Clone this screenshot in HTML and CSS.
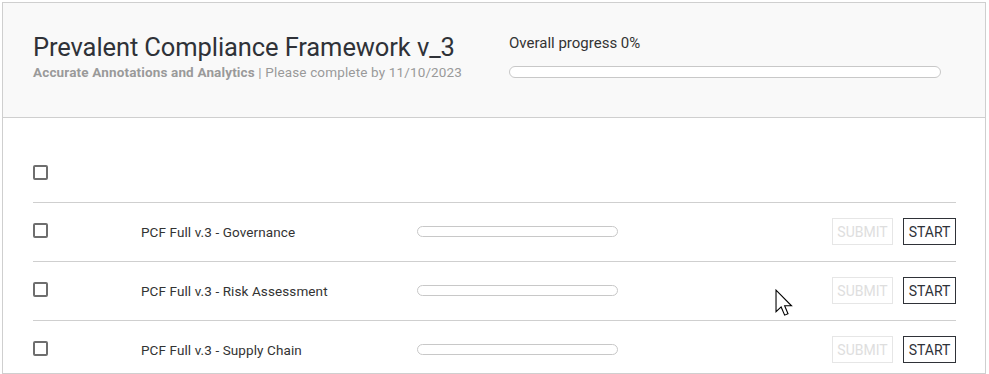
FILE: index.html
```html
<!DOCTYPE html>
<html>
<head>
<meta charset="utf-8">
<link rel="stylesheet" href="styles.css">
</head>
<body>
<div class="panel">
  <header class="head">
    <div class="head-title">
      <h1 class="title">Prevalent Compliance Framework v_3</h1>
      <div class="sub"><b>Accurate Annotations and Analytics</b> | Please complete by 11/10/2023</div>
    </div>
    <div class="overall">
      <div class="overall-label">Overall progress 0%</div>
      <div class="bar bar-wide"></div>
    </div>
  </header>
  <div class="list">
    <div class="row row-head">
      <span class="check"></span>
    </div>
    <div class="row">
      <span class="check"></span>
      <span class="name">PCF Full v.3 - Governance</span>
      <div class="bar bar-row"></div>
      <div class="actions"><button class="btn btn-off">SUBMIT</button><button class="btn">START</button></div>
    </div>
    <div class="row">
      <span class="check"></span>
      <span class="name">PCF Full v.3 - Risk Assessment</span>
      <div class="bar bar-row"></div>
      <div class="actions"><button class="btn btn-off">SUBMIT</button><button class="btn">START</button></div>
    </div>
    <div class="row">
      <span class="check"></span>
      <span class="name">PCF Full v.3 - Supply Chain</span>
      <div class="bar bar-row"></div>
      <div class="actions"><button class="btn btn-off">SUBMIT</button><button class="btn">START</button></div>
    </div>
  </div>
</div>
<svg class="cursor" width="19" height="28" viewBox="0 0 13 19"><path d="M0.7 0.7 L0.7 15.5 L4.2 12.2 L6.6 17.8 L8.9 16.8 L6.6 11.4 L11.3 11.4 Z" fill="#fff" stroke="#000" stroke-width="0.75" stroke-linejoin="miter"/></svg>
</body>
</html>
```
FILE: styles.css
```css
* { box-sizing: border-box; }
html, body { margin: 0; padding: 0; background: #fff; }
body {
  font-family: Roboto, "Liberation Sans", sans-serif;
  color: #333;
  padding: 2px 3px 0 2px;
  height: 374px;
  overflow: hidden;
  position: relative;
}
.panel {
  border: 1px solid #cfcfcf;
  height: 372px;
}
.head {
  background: #f9f9f9;
  border-bottom: 1px solid #cfcfcf;
  height: 115px;
  display: flex;
  padding: 28px 0 0 30px;
}
.head-title { width: 476px; }
.title {
  margin: 0;
  font-weight: 400;
  font-size: 25.5px;
  line-height: 32px;
  color: #2f3238;
  letter-spacing: -0.1px;
}
.sub {
  font-size: 13.5px;
  color: #9a9a9a;
  margin-top: 1px;
  letter-spacing: 0.15px;
}
.sub b { font-weight: 700; }
.overall { width: 432px; padding-top: 3px; }
.overall-label { font-size: 15px; color: #333; line-height: 18px; }
.bar {
  border: 1px solid #c8c8c8;
  border-radius: 6px;
  background: #fff;
  height: 12px;
}
.bar-wide { margin-top: 14px; width: 432px; }
.list { padding: 0 29px 0 30px; }
.row {
  display: flex;
  align-items: center;
  height: 59px;
  border-top: 1px solid #cfcfcf;
  padding-bottom: 1px;
}
.row-head {
  height: 84px;
  border-top: none;
  align-items: flex-start;
  padding: 47px 0 0;
}
.check {
  width: 15px;
  height: 15px;
  border: 2px solid #6e6e6e;
  border-radius: 2px;
  flex: none;
}
.row:not(.row-head) .check { margin-top: -2px; }
.name {
  margin-left: 93px;
  width: 276px;
  font-size: 13.5px;
  color: #333;
  letter-spacing: 0.1px;
}
.bar-row { width: 201px; height: 11px; }
.actions { margin-left: auto; display: flex; gap: 10px; }
.btn {
  font-family: inherit;
  font-size: 14px;
  background: #fff;
  color: #2f3238;
  border: 1px solid #2f3238;
  height: 27px;
  width: 53px;
  padding: 0;
  border-radius: 0;
}
.btn-off { color: #dedede; border-color: #e6e6e6; width: 61px; }
.cursor { position: absolute; left: 775px; top: 289px; }
```
